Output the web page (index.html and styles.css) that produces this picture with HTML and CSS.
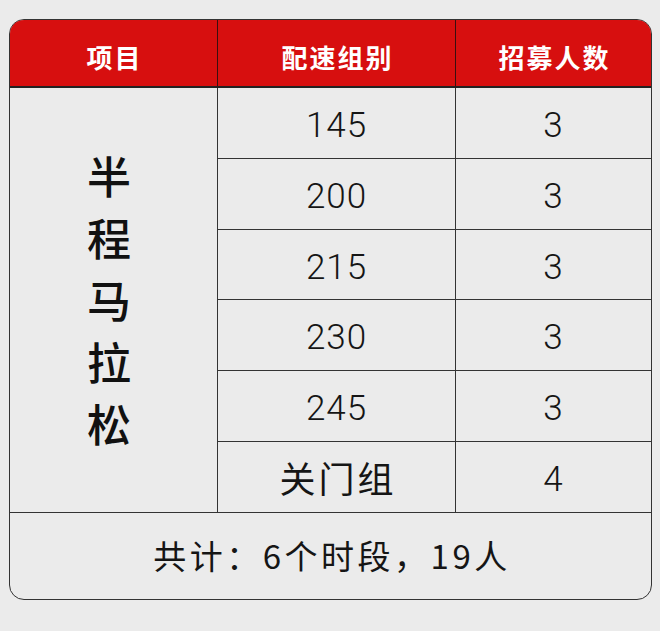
FILE: index.html
```html
<!DOCTYPE html>
<html lang="zh-CN">
<head>
<meta charset="utf-8">
<link rel="stylesheet" href="styles.css">
</head>
<body>
<div class="table">
  <div class="cell head">项目</div>
  <div class="cell head">配速组别</div>
  <div class="cell head last">招募人数</div>

  <div class="cell event"><div class="vtext">半<br>程<br>马<br>拉<br>松</div></div>

  <div class="cell num">145</div>
  <div class="cell num last">3</div>
  <div class="cell num">200</div>
  <div class="cell num last">3</div>
  <div class="cell num">215</div>
  <div class="cell num last">3</div>
  <div class="cell num">230</div>
  <div class="cell num last">3</div>
  <div class="cell num">245</div>
  <div class="cell num last">3</div>
  <div class="cell cjk">关门组</div>
  <div class="cell num last">4</div>

  <div class="cell foot">共计：6个时段，19人</div>
</div>
</body>
</html>
```

FILE: styles.css
```css
html, body {
  margin: 0;
  padding: 0;
  background: #ebebeb;
}
body {
  padding: 19px 0 0 9px;
  font-family: "Noto Sans CJK SC", "Noto Sans", sans-serif;
  color: #151515;
}
.table {
  width: 643px;
  height: 581px;
  box-sizing: border-box;
  border: 1.5px solid #333333;
  border-radius: 15px;
  overflow: hidden;
  display: grid;
  grid-template-columns: 208px 238px 1fr;
  grid-template-rows: 68px repeat(6, 70.83px) 1fr;
  background: #ebebeb;
}
.cell {
  box-sizing: border-box;
  border-right: 1.5px solid #333333;
  border-bottom: 1.5px solid #333333;
  display: flex;
  align-items: center;
  justify-content: center;
}
.cell.last {
  border-right: none;
}
.head {
  background: #d70f0f;
  color: #ffffff;
  font-weight: 700;
  font-size: 26px;
  letter-spacing: 2px;
  padding: 7px 0 0 2px;
  border-bottom: 2px solid #222222;
}
.head:not(.last) {
  border-right-color: #3a1010;
}
.event {
  grid-row: 2 / span 6;
  padding-right: 9px;
}
.vtext {
  font-size: 44px;
  font-weight: 500;
  line-height: 62px;
  text-align: center;
  color: #111;
  padding-bottom: 2px;
}
.num {
  font-family: Roboto, "Liberation Sans", sans-serif;
  font-weight: 300;
  font-size: 35px;
  letter-spacing: 1px;
  padding-top: 5px;
}
.cjk {
  font-size: 36px;
  letter-spacing: 3px;
  padding-left: 3px;
}
.foot {
  grid-column: 1 / span 3;
  border-right: none;
  border-bottom: none;
  font-size: 33px;
  letter-spacing: 3.5px;
  padding-left: 3px;
  padding-bottom: 2px;
}
```
